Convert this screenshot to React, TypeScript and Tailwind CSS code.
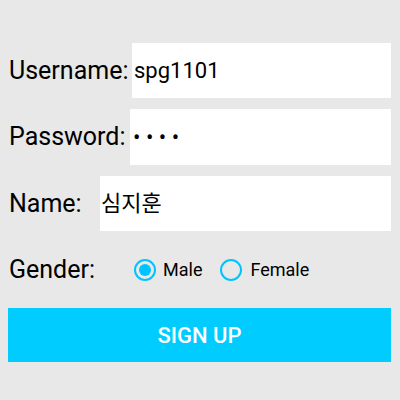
export default function App() {
  const font = { fontFamily: 'Roboto, "Noto Sans CJK KR", sans-serif' };
  return (
    <div className="w-[400px] h-[400px] bg-[#e8e8e8] text-black flex flex-col pl-[8px] pr-[9px] pt-[43px]" style={font}>
      <div className="flex items-center h-[55px]">
        <div className="w-[124px] pl-[1px] text-[25px]">Username:</div>
        <div className="flex-1 h-full bg-white flex items-center pl-[2px] text-[22px]">spg1101</div>
      </div>
      <div className="flex items-center h-[56px] mt-[11px]">
        <div className="w-[122px] pl-[1px] text-[25px]">Password:</div>
        <div className="flex-1 h-full bg-white flex items-center pl-[3px] text-[22px] tracking-[5.5px]">••••</div>
      </div>
      <div className="flex items-center h-[55px] mt-[11px]">
        <div className="w-[92px] pl-[1px] text-[25px]">Name:</div>
        <div className="flex-1 h-full bg-white flex items-center pl-[1px] text-[22px]">심지훈</div>
      </div>
      <div className="flex items-center h-[77px]">
        <div className="w-[126px] pl-[1px] text-[25px]">Gender:</div>
        <div className="flex items-center">
          <div className="w-[22px] h-[22px] rounded-full border-2 border-[#00c4ff] flex items-center justify-center">
            <div className="w-[12px] h-[12px] rounded-full bg-[#00c4ff]" />
          </div>
          <div className="ml-[7px] text-[18px]">Male</div>
          <div className="ml-[18px] w-[22px] h-[22px] rounded-full border-2 border-[#00c4ff]" />
          <div className="ml-[8px] text-[18px]">Female</div>
        </div>
      </div>
      <div className="h-[54px] bg-[#00ccff] flex items-center justify-center text-white text-[22px] font-medium">SIGN UP</div>
    </div>
  );
}
